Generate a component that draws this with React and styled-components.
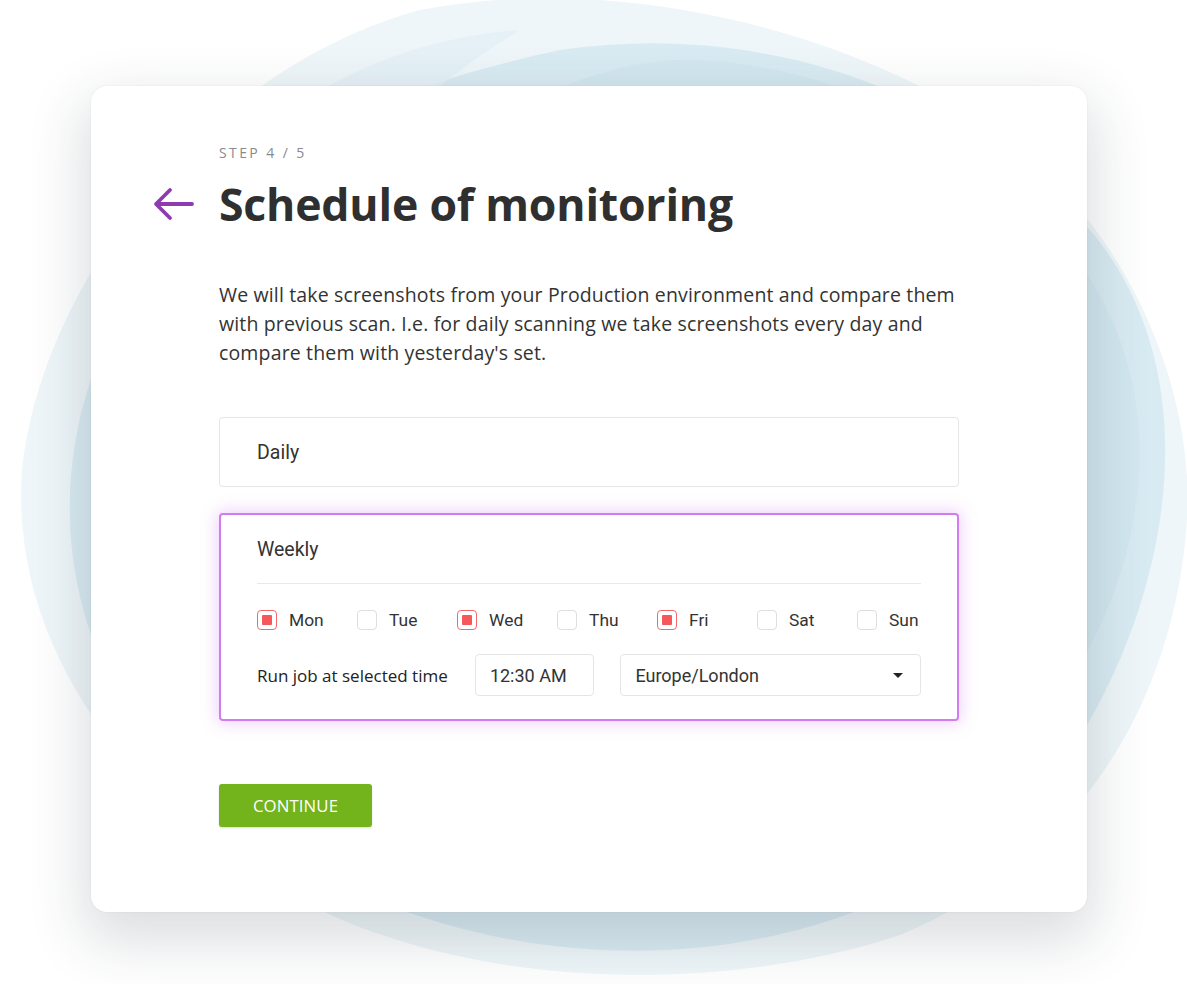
import React, { useState } from 'react';
import styled, { createGlobalStyle } from 'styled-components';

const GlobalStyle = createGlobalStyle`
  html, body {
    margin: 0;
    padding: 0;
    background: #fff;
  }
  body {
    font-family: 'Open Sans', 'Liberation Sans', sans-serif;
    color: #333;
  }
`;

const Page = styled.div`
  width: 1187px;
  height: 984px;
  position: relative;
  overflow: hidden;
  background: #fff;

  display: flex;
  align-items: flex-start;
  padding: 86px 100px 0 91px;
  box-sizing: border-box;
`;

const Backdrop = styled.svg`
  position: absolute;
  top: 0;
  left: 0;
  width: 1187px;
  height: 984px;
  z-index: 0;
`;

const Card = styled.div`
  position: relative;
  z-index: 1;
  width: 996px;
  height: 826px;
  box-sizing: border-box;
  padding: 58px 128px 0 128px;

  background: #fff;
  border-radius: 16px;
  box-shadow: 0 22px 55px 8px rgba(40, 50, 60, 0.16), 0 0 2px rgba(0, 0, 0, 0.08);
`;

const Step = styled.div`
  font-size: 14px;
  letter-spacing: 2.4px;
  color: #8a8a8a;
  line-height: 18px;
`;

const TitleRow = styled.div`
  display: flex;
  align-items: center;
  margin-top: 12px;
  margin-left: -66px;
  gap: 25px;
`;

const BackButton = styled.button`
  width: 41px;
  height: 40px;
  padding: 0;
  border: none;
  background: none;
  display: flex;
  align-items: center;
  justify-content: center;
  cursor: pointer;
`;

const Title = styled.h1`
  margin: 0;
  font-size: 44.6px;
  font-weight: 700;
  line-height: 60px;
  color: #2f2f2f;
  letter-spacing: -0.2px;
`;

const Intro = styled.p`
  margin: 46px 0 0;
  font-size: 19.5px;
  line-height: 29px;
  color: #333;
  letter-spacing: 0.15px;
`;

const Option = styled.div`
  margin-top: ${p => p.$gap}px;
  box-sizing: border-box;
  border-radius: 4px;
  background: #fff;
  border: ${p => (p.$active ? '2px solid #d27cf2' : '1px solid #e3e7e7')};
  box-shadow: ${p => (p.$active ? '0 0 16px 2px rgba(210, 124, 242, 0.35)' : 'none')};
  padding: ${p => (p.$active ? '0 36px 23px' : '0 37px')};
`;

const OptionLabel = styled.div`
  font-family: Roboto, 'Open Sans', sans-serif;
  font-size: 19.5px;
  color: #333;
  height: ${p => p.$h}px;
  display: flex;
  align-items: center;
`;

const Divider = styled.div`
  height: 1px;
  background: #e6eaea;
`;

const Days = styled.div`
  display: flex;
  margin-top: 26px;
`;

const Day = styled.label`
  display: flex;
  align-items: center;
  gap: 12px;
  width: 100px;
  font-family: Roboto, sans-serif;
  font-size: 17.4px;
  color: #333;
  cursor: pointer;
  &:last-child {
    width: auto;
  }
`;

const Box = styled.span`
  width: 20px;
  height: 20px;
  box-sizing: border-box;
  border-radius: 4px;
  border: 1px solid ${p => (p.$checked ? '#f46a6a' : '#dcdfe0')};
  display: flex;
  align-items: center;
  justify-content: center;
  background: #fff;

  &::after {
    content: '';
    width: 10px;
    height: 10px;
    border-radius: 1px;
    background: ${p => (p.$checked ? '#f4585a' : 'transparent')};
  }
`;

const TimeRow = styled.div`
  display: flex;
  align-items: center;
  margin-top: 24px;
`;

const TimeLabel = styled.div`
  font-size: 17px;
  color: #222;
  width: 219px;
`;

const Field = styled.div`
  height: 42px;
  box-sizing: border-box;
  border: 1px solid #e3e6e6;
  border-radius: 4px;
  display: flex;
  align-items: center;
  padding: 0 14px;
  font-family: Roboto, sans-serif;
  font-size: 18px;
  color: #333;
  width: ${p => p.$w}px;
  margin-right: ${p => p.$mr || 0}px;
  justify-content: space-between;
`;

const Caret = styled.span`
  width: 0;
  height: 0;
  border-left: 5px solid transparent;
  border-right: 5px solid transparent;
  border-top: 5px solid #222;
  margin-right: 3px;
`;

const ContinueButton = styled.button`
  margin-top: 63px;
  width: 153px;
  height: 43px;
  border: none;
  border-radius: 3px;
  background: #73b31b;
  color: #fff;
  font-family: 'Open Sans', sans-serif;
  font-size: 16.8px;
  letter-spacing: 0.1px;
  box-shadow: 0 1px 2px rgba(0, 0, 0, 0.15);
  cursor: pointer;
`;

const DAYS = ['Mon', 'Tue', 'Wed', 'Thu', 'Fri', 'Sat', 'Sun'];

function ArrowLeft() {
  return (
    <svg width="41" height="34" viewBox="0 0 41 34" fill="none">
      <path
        d="M39 17H4M17 3L3 17l14 14"
        stroke="#8e3bb2"
        strokeWidth="3.8"
        strokeLinecap="round"
        strokeLinejoin="round"
      />
    </svg>
  );
}

function Blobs() {
  return (
    <Backdrop viewBox="0 0 1187 984">
      <path
        d="M420 10 C600 -25 820 20 980 120 C1120 210 1195 380 1187 520 C1175 700 1080 860 900 935 C720 995 470 990 300 900 C120 800 10 640 22 470 C40 290 200 70 420 10 Z"
        fill="#eef6f9"
      />
      <path
        d="M560 50 C760 20 960 90 1090 230 C1200 360 1180 560 1090 720 C1000 880 800 960 600 950 C400 940 200 840 110 680 C40 540 60 360 180 230 C280 130 420 80 560 50 Z"
        fill="#d9ebf2"
      />
      <path
        d="M700 60 C880 70 1060 180 1120 340 C1170 480 1120 640 1010 760 C900 880 720 930 560 900 C380 860 260 740 230 600 C200 440 280 280 420 170 C500 110 600 56 700 60 Z"
        fill="#cfe5ee"
        opacity="0.7"
      />
      <path
        d="M120 300 C200 140 360 40 520 30 C420 90 300 200 230 330 C160 460 150 620 200 760 C120 660 70 460 120 300 Z"
        fill="#e2f0f5"
        opacity="0.8"
      />
    </Backdrop>
  );
}

export default function App() {
  const [checked, setChecked] = useState({ Mon: true, Wed: true, Fri: true });

  const toggle = day => setChecked(prev => ({ ...prev, [day]: !prev[day] }));

  return (
    <>
      <GlobalStyle />
      <Page>
        <Blobs />
        <Card>
          <Step>STEP 4 / 5</Step>
          <TitleRow>
            <BackButton aria-label="Back">
              <ArrowLeft />
            </BackButton>
            <Title>Schedule of monitoring</Title>
          </TitleRow>
          <Intro>
            We will take screenshots from your Production environment and compare them with
            previous scan. I.e. for daily scanning we take screenshots every day and compare them
            with yesterday's set.
          </Intro>

          <Option $gap={50}>
            <OptionLabel $h={68}>Daily</OptionLabel>
          </Option>

          <Option $gap={26} $active>
            <OptionLabel $h={68}>Weekly</OptionLabel>
            <Divider />
            <Days>
              {DAYS.map(day => (
                <Day key={day} onClick={() => toggle(day)}>
                  <Box $checked={!!checked[day]} />
                  {day}
                </Day>
              ))}
            </Days>
            <TimeRow>
              <TimeLabel>Run job at selected time</TimeLabel>
              <Field $w={120} $mr={26}>12:30 AM</Field>
              <Field $w={302}>
                Europe/London
                <Caret />
              </Field>
            </TimeRow>
          </Option>

          <ContinueButton>CONTINUE</ContinueButton>
        </Card>
      </Page>
    </>
  );
}
